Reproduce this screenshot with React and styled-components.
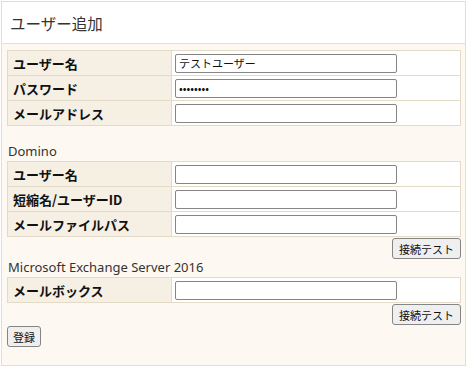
import React from 'react'
import styled, { createGlobalStyle } from 'styled-components'

const Global = createGlobalStyle`
  body {
    margin: 0;
    background: #ffffff;
    font-family: "Noto Sans CJK JP", "Noto Sans", sans-serif;
    color: #222;
  }
`

const sections = [
  {
    title: null,
    rows: [
      { label: 'ユーザー名', value: 'テストユーザー' },
      { label: 'パスワード', value: '••••••••', password: true },
      { label: 'メールアドレス', value: '' },
    ],
  },
  {
    title: 'Domino',
    rows: [
      { label: 'ユーザー名', value: '' },
      { label: '短縮名/ユーザーID', value: '' },
      { label: 'メールファイルパス', value: '' },
    ],
    test: true,
  },
  {
    title: 'Microsoft Exchange Server 2016',
    rows: [{ label: 'メールボックス', value: '' }],
    test: true,
  },
]

function App() {
  return (
    <>
      <Global />
      <Panel>
        <Header>ユーザー追加</Header>
        <Body>
          {sections.map((s, i) => (
            <Section key={i}>
              {s.title && (
                <Caption $afterButton={sections[i - 1] && sections[i - 1].test}>
                  {s.title}
                </Caption>
              )}
              <Table>
                <tbody>
                  {s.rows.map((r) => (
                    <tr key={r.label}>
                      <Label>{r.label}</Label>
                      <Cell>
                        <Input
                          type={r.password ? 'password' : 'text'}
                          defaultValue={r.password ? 'password' : r.value}
                        />
                      </Cell>
                    </tr>
                  ))}
                </tbody>
              </Table>
              {s.test && (
                <Actions>
                  <Button>接続テスト</Button>
                </Actions>
              )}
            </Section>
          ))}
          <Submit>登録</Submit>
        </Body>
      </Panel>
    </>
  )
}

export default App

const Panel = styled.div`
  margin: 1px 0 0 1px;
  width: 463px;
  height: 363px;
  border: 1px solid #e3ded2;
  background: #fdf9f2;
  display: flex;
  flex-direction: column;
  overflow: hidden;
`

const Header = styled.div`
  flex-shrink: 0;
  height: 41px;
  background: #fff;
  border-bottom: 1px solid #e6e0d2;
  padding-left: 8px;
  display: flex;
  align-items: center;
  font-size: 15.5px;
  color: #333;
`

const Body = styled.div`
  flex-shrink: 0;
  padding: 6px 5px 0 5px;
  display: flex;
  flex-direction: column;
`

const Section = styled.div`
  display: flex;
  flex-direction: column;
`

const Caption = styled.div`
  font-family: "Noto Sans", "Noto Sans CJK JP", sans-serif;
  font-size: 13px;
  line-height: 17px;
  color: #333;
  padding: ${(p) => (p.$afterButton ? '0' : '17px')} 0 1px 1px;
`

const Table = styled.table`
  width: 454px;
  border-collapse: collapse;
  border: 1px solid #e3dbc8;
`

const Label = styled.th`
  width: 158px;
  height: 24px;
  background: #f5efe4;
  border: 1px solid #e3dbc8;
  text-align: left;
  padding: 0 0 0 5px;
  font-size: 13px;
  font-weight: bold;
  color: #111;
`

const Cell = styled.td`
  background: #fff;
  border: 1px solid #e3dbc8;
  border-left: 1px solid #e8e2d6;
  padding: 0 0 0 3px;
`

const Input = styled.input`
  box-sizing: border-box;
  width: 222px;
  height: 19px;
  border: 1px solid #858585;
  border-radius: 2px;
  padding: 0 3px;
  font-family: "Noto Sans CJK JP", sans-serif;
  font-size: 11px;
  color: #111;
  display: block;
`

const Actions = styled.div`
  display: flex;
  justify-content: flex-end;
  padding-top: 1px;
  width: 454px;
`

const Button = styled.button`
  height: 21px;
  padding: 0 6px;
  font-family: "Noto Sans CJK JP", sans-serif;
  font-size: 11px;
  color: #111;
  background: #efefef;
  border: 1px solid #858585;
  border-radius: 3px;
`

const Submit = styled(Button)`
  align-self: flex-start;
  margin-top: 1px;
  padding: 0 5px;
`
